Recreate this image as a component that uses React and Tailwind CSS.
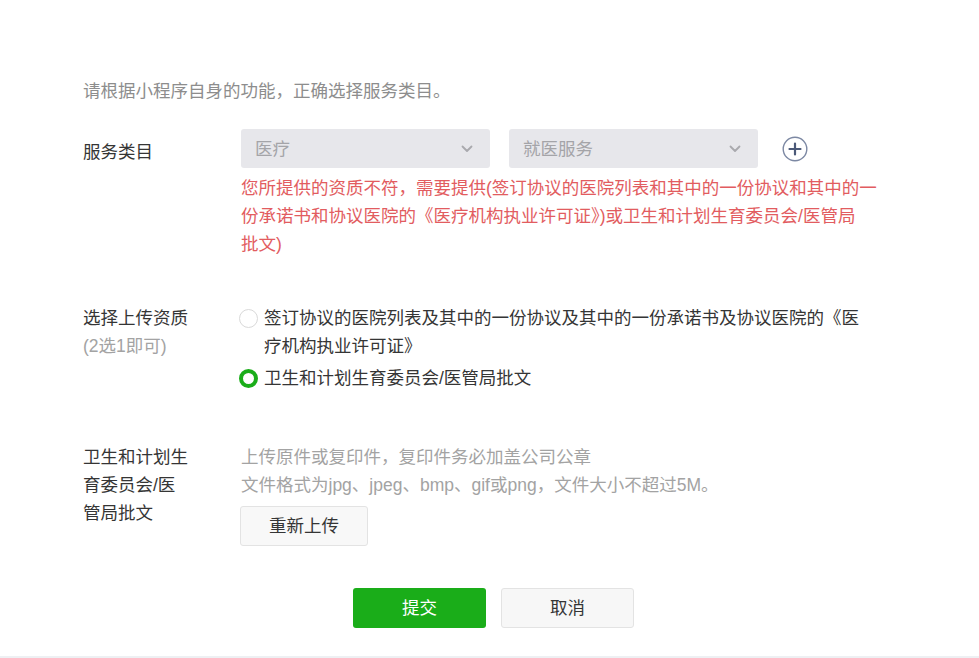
import React from "react";

const font = { fontFamily: '"Liberation Sans", "Noto Sans CJK SC", sans-serif' };

function Chevron() {
  return (
    <svg width="12" height="8" viewBox="0 0 12 8" fill="none">
      <path d="M1.5 1.5 L6 6 L10.5 1.5" stroke="#a9a9ad" strokeWidth="1.8" strokeLinecap="round" strokeLinejoin="round" />
    </svg>
  );
}

function Select({ label }) {
  return (
    <div className="flex h-[39px] w-[249px] items-center justify-between rounded-[3px] bg-[#e7e7eb] pl-[14px] pr-[17px] text-[#a4a4a8]">
      <span>{label}</span>
      <Chevron />
    </div>
  );
}

function Radio({ checked }) {
  if (checked) {
    return (
      <span className="mt-[5px] box-border inline-block h-[19px] w-[19px] shrink-0 rounded-full border-[4px] border-[#1aad19] bg-white" />
    );
  }
  return (
    <span className="mt-[5px] box-border inline-block h-[19px] w-[19px] shrink-0 rounded-full border border-[#d9d9d9] bg-white" />
  );
}

export default function App() {
  return (
    <div className="relative min-h-[658px] w-[979px] bg-white text-[17.5px] leading-[28px] text-[#353535]" style={font}>
      <div className="pl-[83px] pt-[77px] pr-[90px]">
        <div className="text-[#8d8d8d]">请根据小程序自身的功能，正确选择服务类目。</div>

        {/* Row 1 */}
        <div className="mt-[24px] flex">
          <div className="w-[158px] shrink-0 pt-[9px]">服务类目</div>
          <div className="flex-1">
            <div className="flex items-center">
              <Select label="医疗" />
              <div className="ml-[19px]">
                <Select label="就医服务" />
              </div>
              <svg className="ml-[24px]" width="26" height="26" viewBox="0 0 26 26" fill="none">
                <circle cx="13" cy="13" r="11.8" stroke="#7c88a3" strokeWidth="1.4" />
                <path d="M13 7.5 V18.5 M7.5 13 H18.5" stroke="#4b5978" strokeWidth="2.2" strokeLinecap="round" />
              </svg>
            </div>
            <div className="mt-[6px] w-[640px] text-[#e25c60]">
              您所提供的资质不符，需要提供(签订协议的医院列表和其中的一份协议和其中的一份承诺书和协议医院的《医疗机构执业许可证》)或卫生和计划生育委员会/医管局
              <br />
              批文)
            </div>
          </div>
        </div>

        {/* Row 2 */}
        <div className="mt-[46px] flex">
          <div className="w-[158px] shrink-0">
            <div>选择上传资质</div>
            <div className="text-[#a3a3a3]">(2选1即可)</div>
          </div>
          <div className="-ml-[2px] flex-1">
            <div className="flex gap-[6px]">
              <Radio />
              <div className="w-[600px]">签订协议的医院列表及其中的一份协议及其中的一份承诺书及协议医院的《医疗机构执业许可证》</div>
            </div>
            <div className="mt-[4px] flex gap-[6px]">
              <Radio checked />
              <div>卫生和计划生育委员会/医管局批文</div>
            </div>
          </div>
        </div>

        {/* Row 3 */}
        <div className="mt-[51px] flex">
          <div className="w-[158px] shrink-0">
            <div>卫生和计划生</div>
            <div>育委员会/医</div>
            <div>管局批文</div>
          </div>
          <div className="flex-1">
            <div className="text-[#a3a3a3]">上传原件或复印件，复印件务必加盖公司公章</div>
            <div className="text-[#a3a3a3]">文件格式为jpg、jpeg、bmp、gif或png，文件大小不超过5M。</div>
            <button className="mt-[7px] -ml-[1px] flex h-[40px] w-[128px] items-center justify-center rounded-[3px] border border-[#e3e3e3] bg-[#f8f8f8] text-[#353535]">
              重新上传
            </button>
          </div>
        </div>

        {/* Footer buttons */}
        <div className="mt-[42px] flex gap-[15px] pl-[270px]">
          <button className="flex h-[40px] w-[133px] items-center justify-center rounded-[3px] bg-[#1aad19] text-white">提交</button>
          <button className="flex h-[40px] w-[133px] items-center justify-center rounded-[3px] border border-[#e3e3e3] bg-[#f7f7f7] text-[#353535]">取消</button>
        </div>
      </div>
      <div className="absolute bottom-0 left-0 h-[2px] w-full bg-[#eef0f3]" />
    </div>
  );
}
